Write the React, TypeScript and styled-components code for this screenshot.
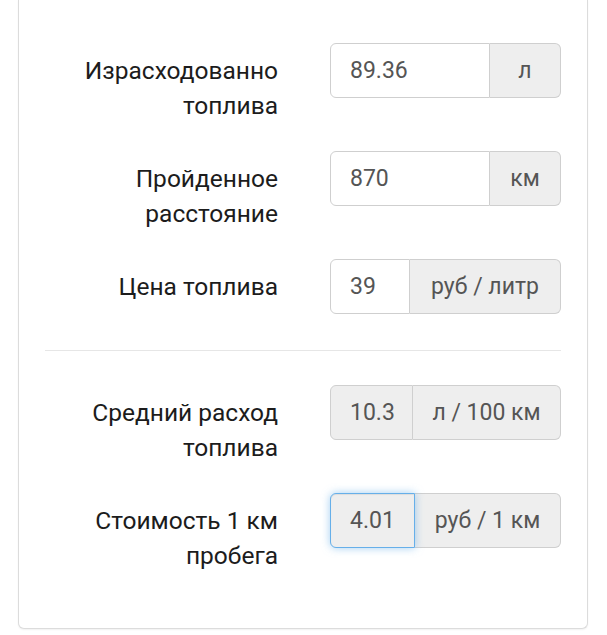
import React from "react"
import styled, { createGlobalStyle } from "styled-components"

const GlobalStyle = createGlobalStyle`
  html, body {
    margin: 0;
    padding: 0;
    background: #fff;
  }
  body {
    font-family: Roboto, "Liberation Sans", Arial, sans-serif;
    color: #333;
    -webkit-font-smoothing: antialiased;
  }
`

type Field = {
  label: string[]
  value: string
  unit: string
  inputWidth: number
  readOnly?: boolean
  focused?: boolean
}

const inputs: Field[] = [
  { label: ["Израсходованно", "топлива"], value: "89.36", unit: "л", inputWidth: 160 },
  { label: ["Пройденное", "расстояние"], value: "870", unit: "км", inputWidth: 160 },
  { label: ["Цена топлива"], value: "39", unit: "руб / литр", inputWidth: 80 },
]

const results: Field[] = [
  { label: ["Средний расход", "топлива"], value: "10.3", unit: "л / 100 км", inputWidth: 83, readOnly: true },
  { label: ["Стоимость 1 км", "пробега"], value: "4.01", unit: "руб / 1 км", inputWidth: 85, readOnly: true, focused: true },
]

const FormRow: React.FC<{ field: Field }> = ({ field }) => (
  <S.Row>
    <S.Label>
      {field.label.map((line) => (
        <div key={line}>{line}</div>
      ))}
    </S.Label>
    <S.InputGroup>
      <S.Input $width={field.inputWidth} $readOnly={field.readOnly} $focused={field.focused}>
        {field.value}
      </S.Input>
      <S.Addon>{field.unit}</S.Addon>
    </S.InputGroup>
  </S.Row>
)

export default function App() {
  return (
    <>
      <GlobalStyle />
      <S.Card>
        {inputs.map((f) => (
          <FormRow key={f.value} field={f} />
        ))}
        <S.Divider />
        {results.map((f) => (
          <FormRow key={f.value} field={f} />
        ))}
      </S.Card>
    </>
  )
}

const S = {
  Card: styled.div`
    margin: 0 19px 8px 18px;
    padding: 43px 26px 27px;
    border: 1px solid #dcdcdc;
    border-top: none;
    border-radius: 0 0 6px 6px;
    box-shadow: 0 1px 2px rgba(0, 0, 0, 0.06);
    background: #fff;
  `,
  Row: styled.div`
    display: grid;
    grid-template-columns: 233px 231px;
    column-gap: 52px;
    align-items: start;
    margin-bottom: 28px;
  `,
  Label: styled.div`
    padding-top: 10px;
    text-align: right;
    font-size: 24.5px;
    line-height: 35px;
    color: #1c1c1c;
  `,
  InputGroup: styled.div`
    display: flex;
    height: 55px;
    box-sizing: border-box;
  `,
  Input: styled.div<{ $width: number; $readOnly?: boolean; $focused?: boolean }>`
    box-sizing: border-box;
    width: ${({ $width }) => $width}px;
    display: flex;
    align-items: center;
    padding: 0 19px;
    font-size: 23px;
    color: #555;
    background: ${({ $readOnly }) => ($readOnly ? "#eeeeee" : "#fff")};
    border: 1px solid ${({ $focused }) => ($focused ? "#66afe9" : "#cfcfcf")};
    border-radius: 6px 0 0 6px;
    box-shadow: ${({ $focused }) =>
      $focused ? "inset 0 1px 1px rgba(0,0,0,.075), 0 0 8px rgba(102,175,233,.6)" : "none"};
    position: relative;
    z-index: ${({ $focused }) => ($focused ? 1 : 0)};
  `,
  Addon: styled.div`
    flex: 1;
    box-sizing: border-box;
    display: flex;
    align-items: center;
    justify-content: center;
    font-size: 23px;
    color: #555;
    background: #eeeeee;
    border: 1px solid #cfcfcf;
    border-left: none;
    border-radius: 0 6px 6px 0;
  `,
  Divider: styled.hr`
    margin: 36px 0 34px;
    border: 0;
    border-top: 1px solid #e6e6e6;
  `,
}
